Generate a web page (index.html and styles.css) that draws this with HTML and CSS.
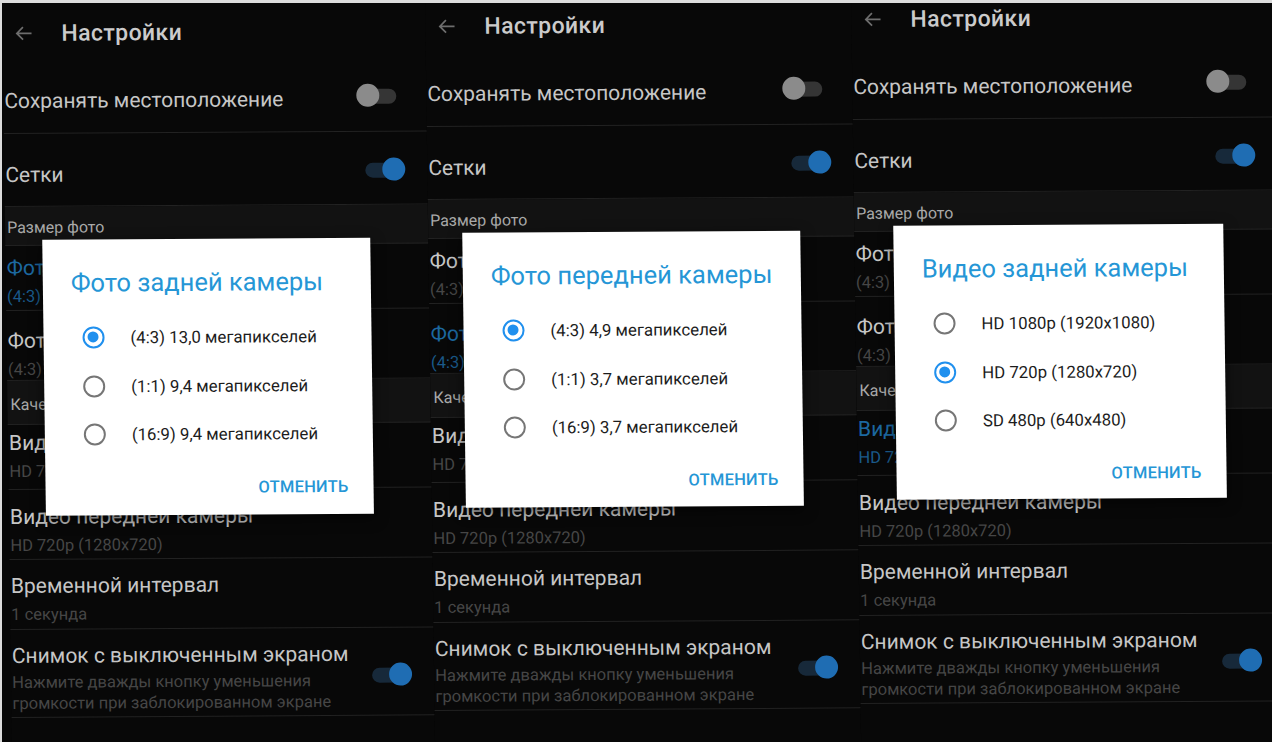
FILE: index.html
```html
<!DOCTYPE html>
<html lang="ru">
<head>
<meta charset="utf-8">
<title>Настройки камеры</title>
<link rel="stylesheet" href="styles.css">
</head>
<body>
<div class="stage">

  <!-- Panel 1 -->
  <section class="panel p1">
    <div class="screen">
      <header class="appbar">
        <svg class="back" viewBox="0 0 20 20" width="20" height="20"><path d="M18 10H3M9 3.5L2.5 10L9 16.5" fill="none" stroke="currentColor" stroke-width="1.8"/></svg>
        <h1 class="apptitle">Настройки</h1>
      </header>
      <div class="row sw r-loc"><span class="rt">Сохранять местоположение</span><span class="toggle off"><i></i></span></div>
      <div class="row sw r-grid"><span class="rt">Сетки</span><span class="toggle on"><i></i></span></div>
      <div class="cat c1">Размер фото</div>
      <div class="row two r-a hl"><div class="rt">Фото задней камеры</div><div class="rs">(4:3) 13,0 мегапикселей</div></div>
      <div class="row two r-b"><div class="rt">Фото передней камеры</div><div class="rs">(4:3) 4,9 мегапикселей</div></div>
      <div class="cat c2">Качество видео</div>
      <div class="row two r-c"><div class="rt">Видео задней камеры</div><div class="rs">HD 720p (1280x720)</div></div>
      <div class="row two r-d"><div class="rt">Видео передней камеры</div><div class="rs">HD 720p (1280x720)</div></div>
      <div class="row two r-e"><div class="rt">Временной интервал</div><div class="rs">1 секунда</div></div>
      <div class="row three r-f"><div class="txt"><div class="rt">Снимок с выключенным экраном</div><div class="rs">Нажмите дважды кнопку уменьшения<br>громкости при заблокированном экране</div></div><span class="toggle on"><i></i></span></div>
    </div>
    <div class="dialog d1">
      <h2 class="dtitle">Фото задней камеры</h2>
      <ul class="opts">
        <li class="opt sel"><span class="radio"></span><span>(4:3) 13,0 мегапикселей</span></li>
        <li class="opt"><span class="radio"></span><span>(1:1) 9,4 мегапикселей</span></li>
        <li class="opt"><span class="radio"></span><span>(16:9) 9,4 мегапикселей</span></li>
      </ul>
      <div class="actions"><span class="btn">ОТМЕНИТЬ</span></div>
    </div>
  </section>

  <!-- Panel 2 -->
  <section class="panel p2">
    <div class="screen">
      <header class="appbar">
        <svg class="back" viewBox="0 0 20 20" width="20" height="20"><path d="M18 10H3M9 3.5L2.5 10L9 16.5" fill="none" stroke="currentColor" stroke-width="1.8"/></svg>
        <h1 class="apptitle">Настройки</h1>
      </header>
      <div class="row sw r-loc"><span class="rt">Сохранять местоположение</span><span class="toggle off"><i></i></span></div>
      <div class="row sw r-grid"><span class="rt">Сетки</span><span class="toggle on"><i></i></span></div>
      <div class="cat c1">Размер фото</div>
      <div class="row two r-a"><div class="rt">Фото задней камеры</div><div class="rs">(4:3) 13,0 мегапикселей</div></div>
      <div class="row two r-b hl"><div class="rt">Фото передней камеры</div><div class="rs">(4:3) 4,9 мегапикселей</div></div>
      <div class="cat c2">Качество видео</div>
      <div class="row two r-c"><div class="rt">Видео задней камеры</div><div class="rs">HD 720p (1280x720)</div></div>
      <div class="row two r-d"><div class="rt">Видео передней камеры</div><div class="rs">HD 720p (1280x720)</div></div>
      <div class="row two r-e"><div class="rt">Временной интервал</div><div class="rs">1 секунда</div></div>
      <div class="row three r-f"><div class="txt"><div class="rt">Снимок с выключенным экраном</div><div class="rs">Нажмите дважды кнопку уменьшения<br>громкости при заблокированном экране</div></div><span class="toggle on"><i></i></span></div>
    </div>
    <div class="dialog d2">
      <h2 class="dtitle">Фото передней камеры</h2>
      <ul class="opts">
        <li class="opt sel"><span class="radio"></span><span>(4:3) 4,9 мегапикселей</span></li>
        <li class="opt"><span class="radio"></span><span>(1:1) 3,7 мегапикселей</span></li>
        <li class="opt"><span class="radio"></span><span>(16:9) 3,7 мегапикселей</span></li>
      </ul>
      <div class="actions"><span class="btn">ОТМЕНИТЬ</span></div>
    </div>
  </section>

  <!-- Panel 3 -->
  <section class="panel p3">
    <div class="screen">
      <header class="appbar">
        <svg class="back" viewBox="0 0 20 20" width="20" height="20"><path d="M18 10H3M9 3.5L2.5 10L9 16.5" fill="none" stroke="currentColor" stroke-width="1.8"/></svg>
        <h1 class="apptitle">Настройки</h1>
      </header>
      <div class="row sw r-loc"><span class="rt">Сохранять местоположение</span><span class="toggle off"><i></i></span></div>
      <div class="row sw r-grid"><span class="rt">Сетки</span><span class="toggle on"><i></i></span></div>
      <div class="cat c1">Размер фото</div>
      <div class="row two r-a"><div class="rt">Фото задней камеры</div><div class="rs">(4:3) 13,0 мегапикселей</div></div>
      <div class="row two r-b"><div class="rt">Фото передней камеры</div><div class="rs">(4:3) 4,9 мегапикселей</div></div>
      <div class="cat c2">Качество видео</div>
      <div class="row two r-c hl"><div class="rt">Видео задней камеры</div><div class="rs">HD 720p (1280x720)</div></div>
      <div class="row two r-d"><div class="rt">Видео передней камеры</div><div class="rs">HD 720p (1280x720)</div></div>
      <div class="row two r-e"><div class="rt">Временной интервал</div><div class="rs">1 секунда</div></div>
      <div class="row three r-f"><div class="txt"><div class="rt">Снимок с выключенным экраном</div><div class="rs">Нажмите дважды кнопку уменьшения<br>громкости при заблокированном экране</div></div><span class="toggle on"><i></i></span></div>
    </div>
    <div class="dialog d3">
      <h2 class="dtitle">Видео задней камеры</h2>
      <ul class="opts">
        <li class="opt"><span class="radio"></span><span>HD 1080p (1920x1080)</span></li>
        <li class="opt sel"><span class="radio"></span><span>HD 720p (1280x720)</span></li>
        <li class="opt"><span class="radio"></span><span>SD 480p (640x480)</span></li>
      </ul>
      <div class="actions"><span class="btn">ОТМЕНИТЬ</span></div>
    </div>
  </section>

</div>
</body>
</html>
```

FILE: styles.css
```css
* { box-sizing: border-box; }

html, body {
  margin: 0;
  padding: 0;
  width: 1272px;
  height: 742px;
  overflow: hidden;
  background: #dcdcdc;
}

body {
  font-family: Roboto, "Noto Sans", "DejaVu Sans", sans-serif;
}

.stage {
  display: flex;
  height: 742px;
  margin: 3px 0 0 2px;
  background: #070707;
  overflow: hidden;
}

.panel {
  position: relative;
  flex: none;
  height: 770px;
  background: #080808;
  transform: rotate(-0.35deg) skewX(0.42deg);
  transform-origin: 0 0;
}

.p1 { width: 423px; margin-top: -3px; }
.p2 { width: 426px; margin-top: -10px; }
.p3 { width: 424px; margin-top: -17px; }

.screen {
  display: flex;
  flex-direction: column;
}

/* App bar */
.appbar {
  height: 66px;
  display: flex;
  align-items: center;
  padding-left: 12px;
}
.back {
  color: #6d6d6d;
  width: 19px;
  height: 19px;
  flex: none;
}
.apptitle {
  margin: 0 0 0 28px;
  font-size: 23px;
  font-weight: 500;
  color: #cbcbcb;
  letter-spacing: 0.4px;
}

/* Rows */
.row {
  border-bottom: 1px solid #222222;
  padding-left: 1px;
  padding-right: 22px;
}
.rt {
  font-size: 21px;
  line-height: 26px;
  color: #c6c6c6;
  white-space: nowrap;
}
.rs {
  font-size: 16.5px;
  line-height: 22px;
  margin-top: 5px;
  color: #464646;
  white-space: nowrap;
}
.hl .rt { color: #1c68a0; }
.hl .rs { color: #1a5a8a; }

.sw {
  display: flex;
  justify-content: space-between;
  align-items: center;
}
.r-loc { height: 68px; padding-top: 3px; }
.r-grid { height: 73px; padding-top: 9px; }

.cat {
  background: #121212;
  border-bottom: 1px solid #222222;
  padding-left: 2px;
  font-size: 16px;
  color: #a9a9a9;
  display: flex;
  align-items: center;
}
.c1 { height: 39px; padding-top: 3px; }
.c2 { height: 44px; padding-top: 4px; padding-left: 3px; }

.r-a { height: 65px; padding-top: 9px; }
.r-b { height: 70px; padding-top: 17px; }
.r-c { height: 65px; padding-top: 5px; }
.r-d { height: 70px; padding-top: 14px; }
.r-e { height: 70px; padding-top: 13px; }
.r-f {
  height: 88px;
  padding-top: 10px;
  display: flex;
  justify-content: space-between;
  align-items: center;
}
.r-f .rs { line-height: 21px; margin-top: 3px; }
.r-f .toggle { margin-top: -4px; margin-right: 0; }

/* Toggle */
.toggle {
  position: relative;
  flex: none;
  width: 48px;
  height: 24px;
}
.toggle::before {
  content: "";
  position: absolute;
  left: 8px;
  right: 8px;
  top: 5px;
  height: 15px;
  border-radius: 8px;
  background: #353535;
}
.toggle i {
  position: absolute;
  top: 0;
  width: 23px;
  height: 23px;
  border-radius: 50%;
  background: #8b8b8b;
}
.toggle.off i { left: 0; }
.toggle.on::before { background: #17293a; }
.toggle.on i { right: 0; background: #1f6db3; }
.sw .toggle { margin-bottom: 6px; }

/* Dialog */
.dialog {
  position: absolute;
  top: 240px;
  background: #ffffff;
  box-shadow: 0 4px 14px rgba(0, 0, 0, 0.6);
  display: flex;
  flex-direction: column;
}
.d1 { left: 37px; width: 328px; height: 276px; }
.d2 { left: 34px; width: 338px; height: 275px; }
.d3 { left: 39px; width: 330px; height: 274px; }

.dtitle {
  margin: 29px 0 0 28px;
  font-size: 25.5px;
  line-height: 28px;
  font-weight: 400;
  color: #2596d6;
  white-space: nowrap;
}
.opts {
  list-style: none;
  margin: 17px 0 0 0;
  padding: 0;
}
.opt {
  height: 48.5px;
  display: flex;
  align-items: center;
  padding-left: 39px;
  font-size: 16.8px;
  color: #1c1c1c;
  white-space: nowrap;
}
.radio {
  flex: none;
  width: 22px;
  height: 22px;
  margin-right: 26px;
  border-radius: 50%;
  border: 2.5px solid #767676;
  position: relative;
}
.opt.sel .radio { border-color: #2090ee; }
.opt.sel .radio::after {
  content: "";
  position: absolute;
  left: 3px;
  top: 3px;
  width: 11px;
  height: 11px;
  border-radius: 50%;
  background: #2090ee;
}
.actions {
  display: flex;
  justify-content: flex-end;
  padding-right: 25px;
  margin-top: 16px;
}
.btn {
  font-size: 16.5px;
  font-weight: 500;
  color: #2596d6;
  letter-spacing: 0.2px;
  line-height: 26px;
}
```
